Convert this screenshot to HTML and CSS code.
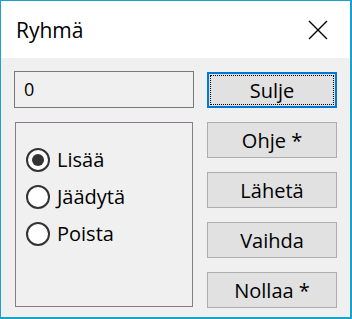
FILE: index.html
```html
<!DOCTYPE html>
<html lang="fi">
<head>
    <meta charset="UTF-8">
    <title>Ryhmä</title>
    <link rel="stylesheet" href="styles.css">
</head>
<body>

<div class="window">
    <div class="titlebar">
        <span class="title">Ryhmä</span>
        <svg class="close" width="20" height="20" viewBox="0 0 20 20">
            <path d="M1 1 L19 19 M19 1 L1 19" stroke="#000" stroke-width="1.4" fill="none"/>
        </svg>
    </div>
    <div class="content">
        <div class="left">
            <div class="textbox">0</div>
            <div class="group">
                <label class="radio"><span class="dot checked"></span>Lisää</label>
                <label class="radio"><span class="dot"></span>Jäädytä</label>
                <label class="radio"><span class="dot"></span>Poista</label>
            </div>
        </div>
        <div class="buttons">
            <button class="btn default"><span>Sulje</span></button>
            <button class="btn">Ohje *</button>
            <button class="btn">Lähetä</button>
            <button class="btn">Vaihda</button>
            <button class="btn">Nollaa *</button>
        </div>
    </div>
</div>

</body>
</html>
```

FILE: styles.css
```css
* { margin: 0; padding: 0; box-sizing: border-box; font-family: 'Open Sans', 'Noto Sans', sans-serif; }
body { background: #fff; }
.window { width: 352px; height: 319px; background: #f0f0f0; border: 1px solid #1ba1cc; border-right-width: 2px; border-bottom-width: 2px; display: flex; flex-direction: column; }
.titlebar { height: 57px; background: #fff; display: flex; align-items: center; justify-content: space-between; padding: 0 22px 0 15px; }
.title { font-size: 21px; color: #000; }
.close { display: block; }
.content { display: flex; gap: 13px; padding: 13px 13px 0 13px; }
.left { width: 180px; display: flex; flex-direction: column; gap: 14px; }
.textbox { height: 37px; border: 1px solid #7a7a7a; background: #f0f0f0; font-size: 18px; padding: 5px 9px; color: #000; }
.group { height: 185px; margin: 0 1px; border: 1px solid #8a7d8a; padding: 18px 10px 0 10px; display: flex; flex-direction: column; }
.radio { height: 37px; display: flex; align-items: center; gap: 7px; font-size: 20px; color: #000; }
.dot { width: 24px; height: 24px; border: 2px solid #333; border-radius: 50%; background: #fff; display: flex; align-items: center; justify-content: center; }
.dot.checked::after { content: ""; width: 12px; height: 12px; border-radius: 50%; background: #333; }
.buttons { width: 130px; display: flex; flex-direction: column; gap: 14px; padding-top: 1px; }
.btn { height: 36px; background: #e1e1e1; border: 1px solid #adadad; font-size: 20px; color: #000; }
.btn.default { border: 2px solid #0078d7; padding: 1px; }
.btn.default span { display: flex; align-items: center; justify-content: center; height: 100%; border: 1px dotted #000; }
```
